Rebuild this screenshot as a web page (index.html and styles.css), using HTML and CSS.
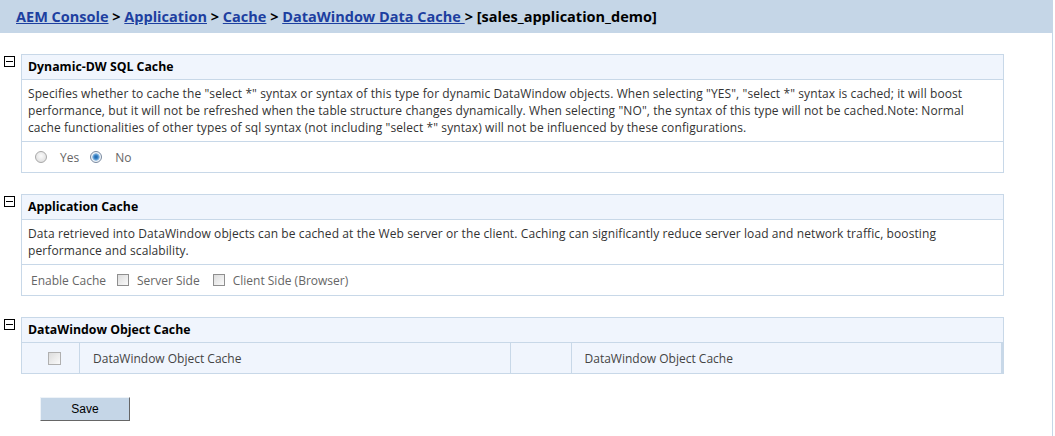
FILE: index.html
```html
<!DOCTYPE html>
<html lang="en">
<head>
    <meta charset="UTF-8">
    <title>DataWindow Data Cache</title>
    <link rel="stylesheet" href="styles.css">
</head>
<body>
    <div class="page">
        <div class="crumbs">
            <a href="#">AEM Console</a> &gt;
            <a href="#">Application</a> &gt;
            <a href="#">Cache</a> &gt;
            <a href="#">DataWindow Data Cache </a> &gt;
            <span class="current">[sales_application_demo]</span>
        </div>

        <div class="content">
            <!-- Dynamic-DW SQL Cache -->
            <div class="section">
                <span class="toggle"></span>
                <div class="panel">
                    <div class="panel-title">Dynamic-DW SQL Cache</div>
                    <div class="panel-desc">Specifies whether to cache the "select *" syntax or syntax of this type for dynamic DataWindow objects. When selecting "YES", "select *" syntax is cached; it will boost performance, but it will not be refreshed when the table structure changes dynamically. When selecting "NO", the syntax of this type will not be cached.Note: Normal cache functionalities of other types of sql syntax (not including "select *" syntax) will not be influenced by these configurations.</div>
                    <div class="panel-opts">
                        <label class="opt opt-radio"><input type="radio" name="dwsql" class="radio"> Yes</label>
                        <label class="opt opt-radio"><input type="radio" name="dwsql" class="radio" checked> No</label>
                    </div>
                </div>
            </div>

            <!-- Application Cache -->
            <div class="section">
                <span class="toggle"></span>
                <div class="panel">
                    <div class="panel-title">Application Cache</div>
                    <div class="panel-desc">Data retrieved into DataWindow objects can be cached at the Web server or the client. Caching can significantly reduce server load and network traffic, boosting performance and scalability.</div>
                    <div class="panel-opts">
                        <span class="opt-label">Enable Cache</span>
                        <label class="opt"><input type="checkbox" class="check"> Server Side</label>
                        <label class="opt"><input type="checkbox" class="check"> Client Side (Browser)</label>
                    </div>
                </div>
            </div>

            <!-- DataWindow Object Cache -->
            <div class="section">
                <span class="toggle"></span>
                <div class="panel">
                    <div class="panel-title">DataWindow Object Cache</div>
                    <div class="obj-row">
                        <div class="cell cell-check"><input type="checkbox" class="check"></div>
                        <div class="cell cell-name">DataWindow Object Cache</div>
                        <div class="cell cell-blank"></div>
                        <div class="cell cell-name">DataWindow Object Cache</div>
                    </div>
                </div>
            </div>

            <div class="actions">
                <button class="save-btn">Save</button>
            </div>
        </div>
    </div>
</body>
</html>
```

FILE: styles.css
```css
body {
    margin: 0;
    font-family: "Open Sans", "Liberation Sans", sans-serif;
    font-size: 12px;
    background: #fff;
}
.page {
    width: 1052px;
    height: 436px;
    border-right: 1px solid #c5d6e7;
}
.crumbs {
    height: 33px;
    line-height: 33px;
    padding-left: 16px;
    background-color: #c5d6e7;
    font-size: 14.5px;
    font-weight: bold;
    color: #000;
}
.crumbs a {
    color: #1d3fa0;
    text-decoration: underline;
}
.content {
    padding-top: 21px;
}
.section {
    display: flex;
    margin-bottom: 21px;
}
.toggle {
    position: relative;
    width: 11px;
    height: 11px;
    margin: 2px 6px 0 4px;
    border: 1px solid #000;
    box-sizing: border-box;
    flex: none;
}
.toggle::after {
    content: "";
    position: absolute;
    left: 1px;
    right: 1px;
    top: 4px;
    height: 1px;
    background: #000;
}
.panel {
    width: 983px;
    border: 1px solid #c8d8e8;
    box-sizing: border-box;
}
.panel-title {
    height: 24px;
    line-height: 24px;
    padding-left: 6px;
    background-color: #f0f5fd;
    border-bottom: 1px solid #c8d8e8;
    font-size: 12.3px;
    font-weight: bold;
    color: #000;
}
.panel-desc {
    padding: 5px 6px;
    line-height: 17px;
    letter-spacing: 0.1px;
    color: #333;
    border-bottom: 1px solid #c8d8e8;
}
.panel-opts {
    display: flex;
    align-items: center;
    height: 30px;
    padding-left: 9px;
    color: #666;
}
.opt-label {
    margin-right: 8px;
}
.opt {
    display: flex;
    align-items: center;
    margin-right: 10px;
}
.opt-radio {
    margin-right: 7px;
}
.radio, .check {
    appearance: none;
    -webkit-appearance: none;
    margin: 0 8px 0 3px;
    width: 12px;
    height: 12px;
    box-sizing: border-box;
}
.radio {
    margin: 0 13px 0 4px;
    border-radius: 50%;
    border: 1px solid #a8a8a8;
    background: radial-gradient(circle at 50% 40%, #fbfbfb 0, #dcdcdc 90%);
}
.radio:checked {
    border-color: #7a8aa0;
    background: radial-gradient(circle, #1d5ea8 0, #3a87c8 2px, #9fc4e6 3.5px, #eef3f8 4px);
}
.check {
    border: 1px solid #8f8f8f;
    background: linear-gradient(135deg, #dcdcdc, #fafafa);
}
.obj-row {
    display: flex;
    height: 30px;
    background-color: #f0f5fd;
    color: #444;
}
.cell {
    display: flex;
    align-items: center;
    border-right: 1px solid #c8d8e8;
}
.cell:last-child {
    border-right: 2px solid #c8d8e8;
}
.cell-check {
    width: 58px;
    padding-left: 26px;
    box-sizing: border-box;
}
.cell-check .check {
    margin: 0;
    width: 13px;
    height: 13px;
    border-color: #b0b0b0;
}
.cell-name {
    flex: 1;
    padding-left: 13px;
}
.cell-blank {
    width: 60px;
}
.actions {
    padding: 2px 0 0 40px;
}
.save-btn {
    width: 90px;
    height: 24px;
    background-color: #c5d6e7;
    border: 1px solid;
    border-color: #eef3f8 #666 #666 #eef3f8;
    font-family: Arial, "Liberation Sans", sans-serif;
    font-size: 12px;
    color: #000;
    cursor: pointer;
}
```
